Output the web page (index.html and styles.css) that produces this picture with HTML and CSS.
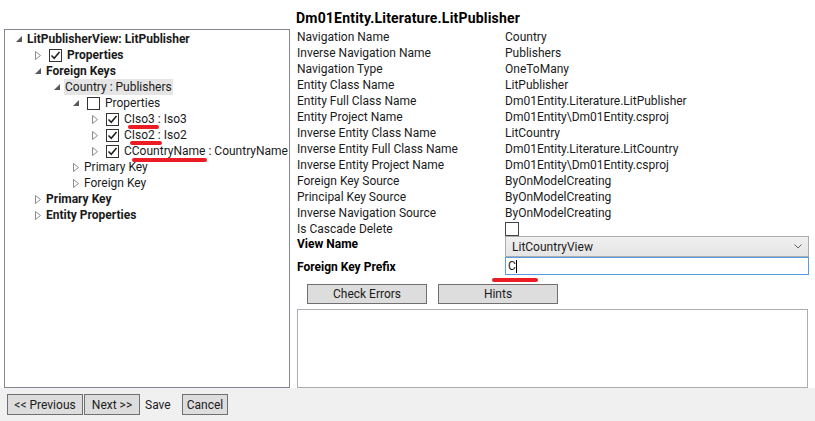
FILE: index.html
```html
<!DOCTYPE html>
<html>
<head>
<meta charset="utf-8">
<link rel="stylesheet" href="styles.css">
</head>
<body>
<div class="main">
  <div class="left">
    <div class="tree">
      <div class="row l0"><span class="exp"><svg width="6" height="6"><path d="M6 0L6 6L0 6Z" fill="#595959"/></svg></span><span class="b">LitPublisherView: LitPublisher</span></div>
      <div class="row l1"><span class="exp"><svg width="6" height="9"><path d="M0.5 0.5L5.5 4.5L0.5 8.5Z" fill="none" stroke="#8c8c8c"/></svg></span><span class="cb on"><svg width="11" height="11"><path d="M1.5 5.5L4.2 8.2L9.5 2" fill="none" stroke="#212121" stroke-width="1.6"/></svg></span><span class="b">Properties</span></div>
      <div class="row l1"><span class="exp"><svg width="6" height="6"><path d="M6 0L6 6L0 6Z" fill="#595959"/></svg></span><span class="b">Foreign Keys</span></div>
      <div class="row l2"><span class="exp"><svg width="6" height="6"><path d="M6 0L6 6L0 6Z" fill="#595959"/></svg></span><span class="sel">Country : Publishers</span></div>
      <div class="row l3"><span class="exp"><svg width="6" height="6"><path d="M6 0L6 6L0 6Z" fill="#595959"/></svg></span><span class="cb"></span><span>Properties</span></div>
      <div class="row l4"><span class="exp"><svg width="6" height="9"><path d="M0.5 0.5L5.5 4.5L0.5 8.5Z" fill="none" stroke="#8c8c8c"/></svg></span><span class="cb on"><svg width="11" height="11"><path d="M1.5 5.5L4.2 8.2L9.5 2" fill="none" stroke="#212121" stroke-width="1.6"/></svg></span><span>CIso3 : Iso3</span></div>
      <div class="row l4"><span class="exp"><svg width="6" height="9"><path d="M0.5 0.5L5.5 4.5L0.5 8.5Z" fill="none" stroke="#8c8c8c"/></svg></span><span class="cb on"><svg width="11" height="11"><path d="M1.5 5.5L4.2 8.2L9.5 2" fill="none" stroke="#212121" stroke-width="1.6"/></svg></span><span>CIso2 : Iso2</span></div>
      <div class="row l4"><span class="exp"><svg width="6" height="9"><path d="M0.5 0.5L5.5 4.5L0.5 8.5Z" fill="none" stroke="#8c8c8c"/></svg></span><span class="cb on"><svg width="11" height="11"><path d="M1.5 5.5L4.2 8.2L9.5 2" fill="none" stroke="#212121" stroke-width="1.6"/></svg></span><span>CCountryName : CountryName</span></div>
      <div class="row l3"><span class="exp"><svg width="6" height="9"><path d="M0.5 0.5L5.5 4.5L0.5 8.5Z" fill="none" stroke="#8c8c8c"/></svg></span><span>Primary Key</span></div>
      <div class="row l3"><span class="exp"><svg width="6" height="9"><path d="M0.5 0.5L5.5 4.5L0.5 8.5Z" fill="none" stroke="#8c8c8c"/></svg></span><span>Foreign Key</span></div>
      <div class="row l1"><span class="exp"><svg width="6" height="9"><path d="M0.5 0.5L5.5 4.5L0.5 8.5Z" fill="none" stroke="#8c8c8c"/></svg></span><span class="b">Primary Key</span></div>
      <div class="row l1"><span class="exp"><svg width="6" height="9"><path d="M0.5 0.5L5.5 4.5L0.5 8.5Z" fill="none" stroke="#8c8c8c"/></svg></span><span class="b">Entity Properties</span></div>
    </div>
  </div>
  <div class="right">
    <div class="title">Dm01Entity.Literature.LitPublisher</div>
    <div class="props">
      <div>Navigation Name</div><div>Country</div>
      <div>Inverse Navigation Name</div><div>Publishers</div>
      <div>Navigation Type</div><div>OneToMany</div>
      <div>Entity Class Name</div><div>LitPublisher</div>
      <div>Entity Full Class Name</div><div>Dm01Entity.Literature.LitPublisher</div>
      <div>Entity Project Name</div><div>Dm01Entity\Dm01Entity.csproj</div>
      <div>Inverse Entity Class Name</div><div>LitCountry</div>
      <div>Inverse Entity Full Class Name</div><div>Dm01Entity.Literature.LitCountry</div>
      <div>Inverse Entity Project Name</div><div>Dm01Entity\Dm01Entity.csproj</div>
      <div>Foreign Key Source</div><div>ByOnModelCreating</div>
      <div>Principal Key Source</div><div>ByOnModelCreating</div>
      <div>Inverse Navigation Source</div><div>ByOnModelCreating</div>
      <div>Is Cascade Delete</div><div><span class="cb plain"></span></div>
    </div>
    <div class="form">
      <div class="flabel view">View Name</div>
      <div class="combo"><span>LitCountryView</span><svg width="8" height="5"><path d="M0.5 0.5L4 4L7.5 0.5" fill="none" stroke="#606060"/></svg></div>
      <div class="flabel prefix">Foreign Key Prefix</div>
      <div class="textbox">C<span class="caret"></span></div>
    </div>
    <div class="actions">
      <button class="btn wide">Check Errors</button>
      <button class="btn wide">Hints</button>
    </div>
    <div class="output"></div>
  </div>
</div>
<div class="bottom">
  <button class="btn prev">&lt;&lt; Previous</button>
  <button class="btn next">Next &gt;&gt;</button>
  <span class="save">Save</span>
  <button class="btn cancel">Cancel</button>
</div>
<span class="mark m1"></span>
<span class="mark m2"></span>
<span class="mark m3"></span>
<span class="mark m4"></span>
</body>
</html>
```
FILE: styles.css
```css
* { box-sizing: border-box; }
html, body { margin: 0; padding: 0; }
body {
  width: 815px;
  height: 421px;
  overflow: hidden;
  background: #ffffff;
  font-family: Roboto, "Liberation Sans", sans-serif;
  font-size: 12px;
  color: #1b1b1b;
  position: relative;
}
.main {
  display: flex;
  height: 388px;
}
.left {
  width: 290px;
  padding: 29px 0 0 4px;
}
.tree {
  width: 286px;
  height: 359px;
  border: 1px solid #828790;
  padding-top: 1px;
}
.row {
  display: flex;
  align-items: center;
  height: 16px;
  white-space: nowrap;
}
.l0 { padding-left: 11px; }
.l1 { padding-left: 30px; }
.l2 { padding-left: 49px; }
.l3 { padding-left: 68px; }
.l4 { padding-left: 87px; }
.exp {
  width: 11px;
  flex: none;
  display: flex;
  align-items: center;
}
.exp svg { display: block; }
.b { font-weight: bold; }
.sel {
  background: #e5e5e5;
  padding: 0 1px;
  margin-left: -1px;
  line-height: 16px;
}
.cb {
  display: inline-flex;
  align-items: center;
  justify-content: center;
  width: 13px;
  height: 13px;
  border: 1px solid #333333;
  background: #fff;
  margin: 0 5px 0 3px;
  flex: none;
}
.cb svg { display: block; }
.cb.plain { margin: 1px 0 0 0; width: 14px; height: 14px; border-color: #444; vertical-align: top; }
.right {
  flex: 1;
  padding: 9px 7px 0 7px;
  display: flex;
  flex-direction: column;
}
.title {
  font-weight: bold;
  font-size: 14px;
  letter-spacing: 0.2px;
  line-height: 18px;
  height: 18px;
  margin-left: -1px;
  color: #000;
}
.props {
  display: grid;
  grid-template-columns: 208px 1fr;
  grid-auto-rows: 16px;
  line-height: 16px;
  margin-top: 2px;
}
.form {
  display: grid;
  grid-template-columns: 208px 1fr;
  margin-top: -1px;
}
.flabel {
  font-weight: bold;
  color: #000;
}
.flabel.view { padding-top: 1px; }
.flabel.prefix { padding-top: 3px; }
.combo {
  height: 21px;
  border: 1px solid #acacac;
  background: linear-gradient(#f0f0f0, #e5e5e5);
  display: flex;
  align-items: center;
  justify-content: space-between;
  padding: 0 6px 0 6px;
  margin-right: -1px;
}
.combo svg { display: block; }
.textbox {
  height: 18px;
  border: 1px solid #569de5;
  display: flex;
  align-items: center;
  padding-left: 2px;
  line-height: 16px;
  margin-right: -1px;
}
.caret {
  display: inline-block;
  width: 1px;
  height: 13px;
  background: #000;
}
.actions {
  display: flex;
  gap: 11px;
  padding-left: 10px;
  margin-top: 9px;
}
.btn {
  font-family: inherit;
  font-size: 12px;
  color: #1b1b1b;
  background: #dddddd;
  border: 1px solid #707070;
  border-radius: 0;
  height: 21px;
  padding: 0 4px;
  line-height: 16px;
}
.btn.wide { width: 120px; height: 20px; }
.btn.prev { width: 76px; }
.btn.next { width: 56px; }
.btn.cancel { width: 46px; }
.output {
  margin-top: 5px;
  height: 80px;
  border: 1px solid #abadb3;
  width: 511px;
}
.bottom {
  height: 33px;
  background: #f0f0f0;
  display: flex;
  align-items: center;
  padding-left: 7px;
  gap: 1px;
}
.save { margin: 0 10px 0 4px; }
.mark {
  position: absolute;
  height: 4px;
  border-radius: 2px;
  background: #ed1c24;
}
.m1 { left: 128px; top: 125px; width: 31px; }
.m2 { left: 130px; top: 141px; width: 32px; }
.m3 { left: 132px; top: 158px; width: 75px; }
.m4 { left: 492px; top: 278px; width: 46px; }
```
